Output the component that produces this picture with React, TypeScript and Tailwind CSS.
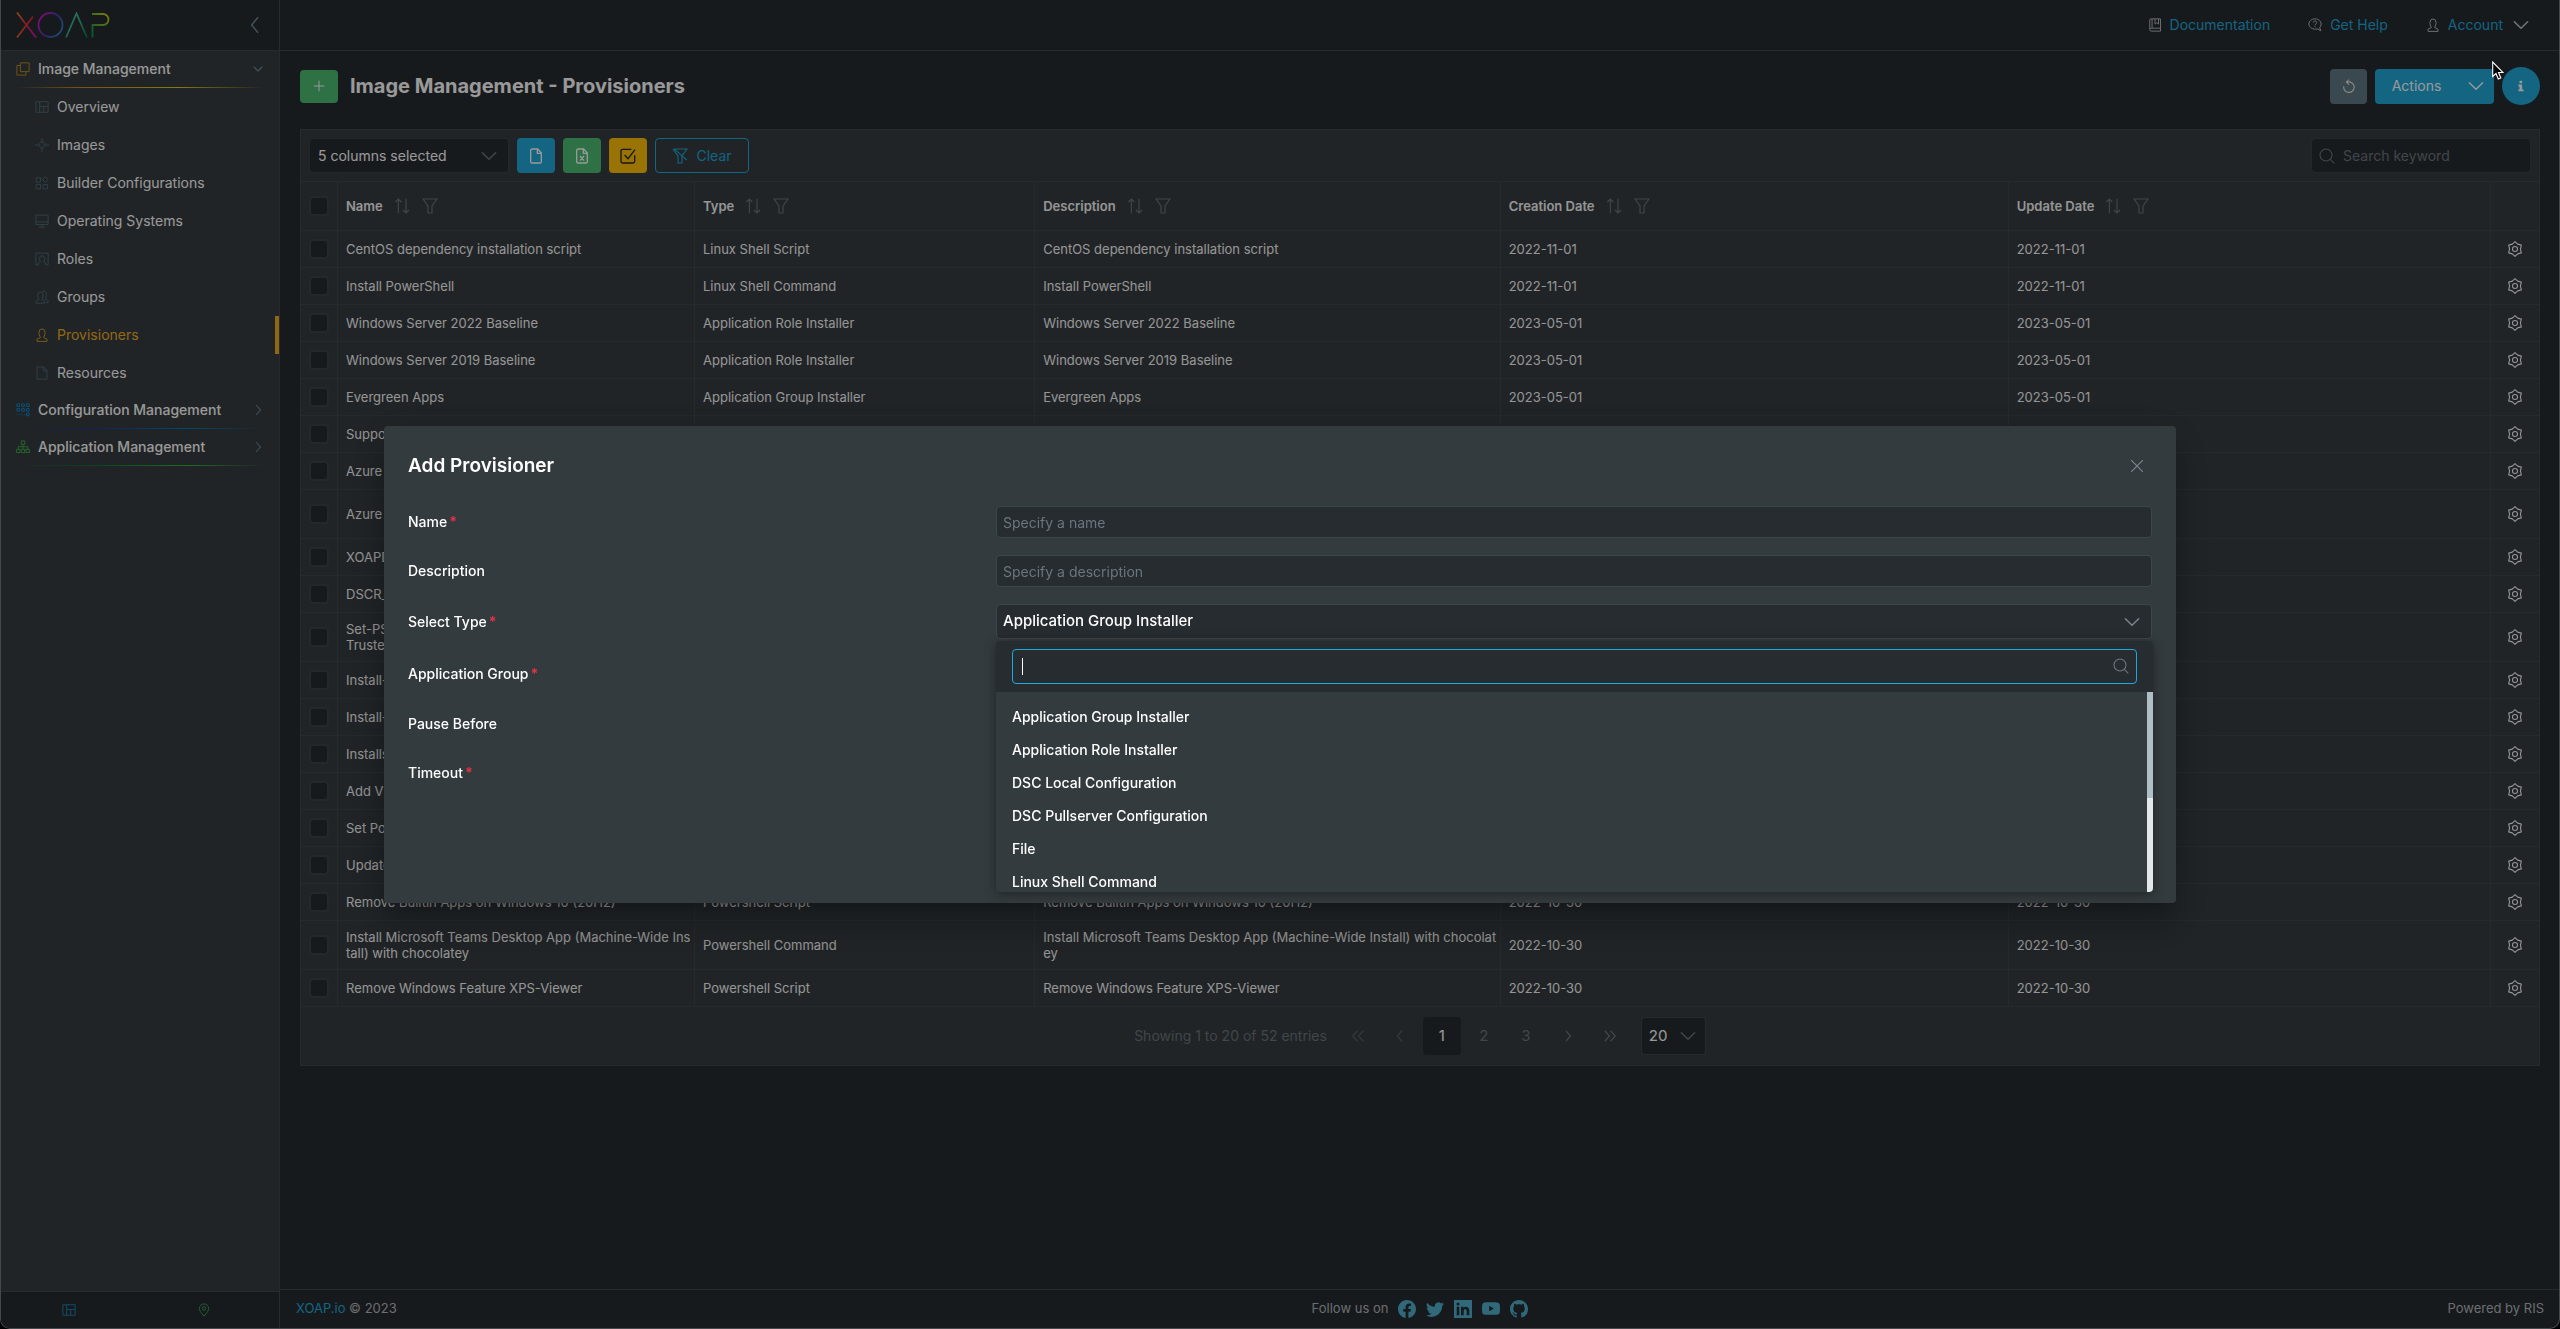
import { useState } from "react";
import type { ReactNode } from "react";
import { BsFacebook, BsGithub, BsTwitter, BsYoutube } from "react-icons/bs";

type IconProps = { className?: string };

// base wrapper for the thin line icons
function Line({ className = "size-3.5", width = 1.7, children }: { className?: string; width?: number; children: ReactNode }) {
    return (
        <svg viewBox="0 0 24 24" fill="none" stroke="currentColor" strokeWidth={width} className={`shrink-0 ${className}`} aria-hidden="true">
            {children}
        </svg>
    );
}

const UserIcon = ({ className }: IconProps) => (
    <Line className={className}><path d="M9 15.200C7.400 13.600 6.800 10.500 6.800 7.500a5.200 5.800 0 0 1 10.400 0c0 3-.6 6.100-2.200 7.700v1.300l5.500 2.500v4h-17v-4L9 16.500z" /></Line>
);
const FileIcon = ({ className }: IconProps) => (
    <Line className={className}><path d="M3.500 1.500h11l6 6v15h-17zM14 1.500V8h6.500" /></Line>
);
const QuiltIcon = ({ className }: IconProps) => (
    <Line className={className}><path d="M1.500 3h21v18h-21zM8 3v18M8 11h14.500M15 11v10" /></Line>
);
const ImagesIcon = () => (
    <Line><path d="M12 0v7M12 17v7M0 12h7M17 12h7M8.500 6l3.500 3 3.500-3M8.500 18l3.500-3 3.500 3M6 8.500L9 12l-3 3.500M18 8.500L15 12l3 3.500" /></Line>
);
const BuilderIcon = () => (
    <Line><path d="M2 3h7.500v7.500H2zM2 14.500h7.500V22H2zM14 14.500h7.500V22H14zM17.700 1l5 5-5 5-5-5z" /></Line>
);
const MonitorIcon = () => (
    <Line><path d="M1.500 2h21v16h-21zM1.500 13.500h21M12 18v4.500M7 22.500h10" /></Line>
);
const RolesIcon = () => (
    <Line><path d="M6 22H1.500V2h21v20H18M6 22v-3.500l3.500-2c-1.500-1.500-1.800-3.500-1.800-5.500a4.300 4.500 0 0 1 8.600 0c0 2-.3 4-1.800 5.500l3.500 2V22" /></Line>
);
const GroupsIcon = () => (
    <Line><path d="M6.500 15.500C5 14 4.500 11 4.500 8.500a4.700 5 0 0 1 9.400 0c0 2.500-.5 5.500-2 7v1l4.600 2.500v3.500h-15V19l5-2.500zM12.500 2.500a4.700 5 0 0 1 6.900 5.500c0 2.500-.5 5-1.900 6.500v1l5 2.500v3.500h-3" /></Line>
);
const CopiesIcon = ({ className }: IconProps) => (
    <Line className={className}><path d="M7.500 1.500h15v15h-15zM7.500 6H1.500v16.500H17v-6" /></Line>
);
const GridIcon = ({ className }: IconProps) => (
    <Line className={className}>
        <path d="M1.500 1.500h4.500v4.500h-4.500zM9.800 1.500h4.500v4.500h-4.500zM18 1.500h4.500v4.500h-4.500zM1.500 9.500h4.500v4.500h-4.500zM9.800 9.500h4.500v4.500h-4.500zM18 9.500h4.500v4.500h-4.500zM18 17.500h4.500v4.500h-4.500zM1 20h2M5.500 20h2M10 20h2M14 20h2" />
    </Line>
);
const SitemapIcon = ({ className }: IconProps) => (
    <Line className={className}><path d="M9 1.500h6v6H9zM1 16h6v5.500H1zM9 16h6v5.500H9zM17 16h6v5.500h-6zM12 7.500V16M4 16v-4.500h16V16" /></Line>
);
const BookIcon = ({ className }: IconProps) => (
    <Line className={className}><path d="M3 18.500V3.500a2 2 0 0 1 2-2h16.500v21H5.500a2.500 2.500 0 0 1 0-5h16M7 1.500v16M12 1.500v9l3-2.500 3 2.500v-9" /></Line>
);
const HelpIcon = ({ className }: IconProps) => (
    <Line className={className}>
        <path d="M12 1.500c6 0 10.500 3.800 10.500 8.800 0 2.700-1 4.700-2.500 6.200l2 5.500-6-3.300c-7 1.800-14.500-2-14.500-8.400C1.500 5.300 6 1.500 12 1.500zM9 7.800c.3-3.300 6-3.300 6 .2 0 2.200-3 2-3 4.500M12 14v1.800" />
    </Line>
);
const GearIcon = ({ className }: IconProps) => (
    <Line className={className} width={1.6}>
        <path strokeLinejoin="round" d="M12 1l4 3.700 5.500 1.500-1.400 5.800 1.400 5.800-5.500 1.500L12 23l-4-3.700-5.500-1.500L3.900 12 2.500 6.200 8 4.700z" />
        <circle cx="12" cy="12" r="3.800" />
    </Line>
);
const PinIcon = ({ className }: IconProps) => (
    <Line className={className}><path d="M12 22.500C7 16.500 4 13 4 9.500a8 8 0 0 1 16 0c0 3.500-3 7-8 13z" /><circle cx="12" cy="9.500" r="3" /></Line>
);
const SearchIcon = ({ className }: IconProps) => (
    <Line className={className} width={1.6}><circle cx="10.500" cy="10.500" r="9" /><path d="M17 17l6 6" /></Line>
);
const SortIcon = () => (
    <Line className="size-4"><path d="M6.500 23V1.500M2 6l4.500-4.500L11 6M18 1v21.500M13.500 18l4.500 4.500 4.500-4.500" /></Line>
);
const FilterIcon = () => (
    <Line className="size-4"><path d="M1.500 1.500h21L15 12v10.500H9V12z" /></Line>
);
const Chevron = ({ className, d = "M2 7l10 10L22 7" }: IconProps & { d?: string }) => (
    <Line className={className} width={2.2}><path strokeLinecap="round" strokeLinejoin="round" d={d} /></Line>
);

const RIGHT = "M8 2l9 10-9 10";
const LEFT = "M16 1L7 12l9 11";

function Logo() {
    return (
        <svg viewBox="0 0 94 26" fill="none" strokeWidth="1.8" className="h-[26px] w-[94px]" role="img" aria-label="XOAP">
            <defs>
                <linearGradient id="lx" x1="0" y1="0" x2="20" y2="26" gradientUnits="userSpaceOnUse">
                    <stop offset="0" stopColor="#e08a18" />
                    <stop offset=".5" stopColor="#e0204c" />
                    <stop offset="1" stopColor="#d012c8" />
                </linearGradient>
                <linearGradient id="lx2" x1="19" y1="0" x2="0" y2="26" gradientUnits="userSpaceOnUse">
                    <stop offset="0" stopColor="#d02030" />
                    <stop offset="1" stopColor="#e06030" />
                </linearGradient>
                <linearGradient id="lo" x1="22" y1="6" x2="47" y2="20" gradientUnits="userSpaceOnUse">
                    <stop offset="0" stopColor="#e010c8" />
                    <stop offset=".5" stopColor="#5038a8" />
                    <stop offset="1" stopColor="#2a88c8" />
                </linearGradient>
                <linearGradient id="la" x1="50" y1="0" x2="71" y2="26" gradientUnits="userSpaceOnUse">
                    <stop offset="0" stopColor="#48b8b0" />
                    <stop offset=".5" stopColor="#38b088" />
                    <stop offset="1" stopColor="#087038" />
                </linearGradient>
                <linearGradient id="lp" x1="93" y1="4" x2="76" y2="20" gradientUnits="userSpaceOnUse">
                    <stop offset="0" stopColor="#c8d010" />
                    <stop offset="1" stopColor="#109848" />
                </linearGradient>
            </defs>
            <path stroke="url(#lx)" d="M1 .5l19 25" />
            <path stroke="url(#lx2)" d="M17 4.500L1 25.500" />
            <circle stroke="url(#lo)" cx="34.500" cy="13" r="12" />
            <path stroke="url(#la)" d="M50 25.500L60.500 1.500l10.500 24" />
            <path stroke="url(#lp)" d="M76 2h11a5.500 5.500 0 0 1 0 11h-10.500v12.500" />
        </svg>
    );
}

const navItems = [
    { label: "Overview", icon: <QuiltIcon /> },
    { label: "Images", icon: <ImagesIcon /> },
    { label: "Builder Configurations", icon: <BuilderIcon /> },
    { label: "Operating Systems", icon: <MonitorIcon /> },
    { label: "Roles", icon: <RolesIcon /> },
    { label: "Groups", icon: <GroupsIcon /> },
    { label: "Provisioners", icon: <UserIcon />, active: true },
    { label: "Resources", icon: <FileIcon /> },
];

const columns = ["Name", "Type", "Description", "Creation Date", "Update Date"];

// name, type, description, date
const rows: [string, string, string, string][] = [
    ["CentOS dependency installation script", "Linux Shell Script", "CentOS dependency installation script", "2022-11-01"],
    ["Install PowerShell", "Linux Shell Command", "Install PowerShell", "2022-11-01"],
    ["Windows Server 2022 Baseline", "Application Role Installer", "Windows Server 2022 Baseline", "2023-05-01"],
    ["Windows Server 2019 Baseline", "Application Role Installer", "Windows Server 2019 Baseline", "2023-05-01"],
    ["Evergreen Apps", "Application Group Installer", "Evergreen Apps", "2023-05-01"],
    ["Support Tools", "Application Group Installer", "Support Tools", "2023-05-01"],
    ["Azure Sysprep", "Powershell Script", "Azure Sysprep", "2022-10-30"],
    ["Azure Cleanup", "Powershell Script", "Azure Cleanup for Windows images that are built and published in the shared gallery", "2022-10-30"],
    ["XOAPDSC", "Powershell Script", "XOAPDSC", "2022-10-30"],
    ["DSCR_Font", "Powershell Script", "DSCR_Font", "2022-10-30"],
    ["Set-PSRepository PSGallery\nTrusted", "Powershell Command", "Set-PSRepository", "2022-10-30"],
    ["Install-Module Az", "Powershell Command", "Install-Module Az", "2022-10-30"],
    ["Install-Provider", "Powershell Command", "Install-Provider", "2022-10-30"],
    ["Installs Chocolatey", "Powershell Script", "Installs Chocolatey", "2022-10-30"],
    ["Add VS Code", "Powershell Command", "Add VS Code", "2022-10-30"],
    ["Set Power Plan", "Powershell Script", "Set Power Plan", "2022-10-30"],
    ["Update Windows", "Powershell Script", "Update Windows", "2022-10-30"],
    ["Remove Builtin Apps on Windows 10 (20H2)", "Powershell Script", "Remove Builtin Apps on Windows 10 (20H2)", "2022-10-30"],
    ["Install Microsoft Teams Desktop App (Machine-Wide Install) with chocolatey", "Powershell Command", "Install Microsoft Teams Desktop App (Machine-Wide Install) with chocolatey", "2022-10-30"],
    ["Remove Windows Feature XPS-Viewer", "Powershell Script", "Remove Windows Feature XPS-Viewer", "2022-10-30"],
];

const types = [
    "Application Group Installer",
    "Application Role Installer",
    "DSC Local Configuration",
    "DSC Pullserver Configuration",
    "File",
    "Linux Shell Command",
];

function NavSection({ label, icon, line, open }: { label: string; icon: ReactNode; line: string; open?: boolean }) {
    return (
        <button type="button" aria-expanded={!!open} className="block w-full px-[15px] text-left">
            <span className="flex h-9 items-center gap-2 text-sm font-medium text-white">
                {icon}
                <span className="grow">{label}</span>
                <Chevron className="size-3 text-[#6c8a99]" d={open ? "M4 8l8 8 8-8" : "M9 3l8 9-8 9"} />
            </span>
            <span className={`block h-px ${line}`} />
        </button>
    );
}

function Sidebar() {
    return (
        <aside className="flex w-[279px] shrink-0 flex-col border-r border-[#42494d] bg-[#363d40]">
            <div className="flex h-[51px] items-center justify-between border-b border-[#42494d] bg-[#272c31] pr-4 pl-[15px]">
                <Logo />
                <button type="button" aria-label="Collapse menu" className="text-[#6c8a99]"><Chevron className="size-4" d={LEFT} /></button>
            </div>
            <nav className="grow">
                <NavSection
                    open
                    label="Image Management"
                    line="bg-[linear-gradient(90deg,transparent,#c08a20_25%,#e0cc20_65%,transparent)]"
                    icon={<CopiesIcon className="size-3.5 text-[#b58a24]" />}
                />
                <ul>
                    {navItems.map((item) => (
                        <li key={item.label}>
                            <a
                                href="#"
                                className={`flex h-[38px] items-center gap-2 border-r-4 pl-[34px] text-sm ${item.active ? "border-[#f0ae22] text-[#f0ae22]" : "border-transparent text-white"}`}
                            >
                                <span className={item.active ? "opacity-80" : "text-[#4f6a76]"}>{item.icon}</span>
                                {item.label}
                            </a>
                        </li>
                    ))}
                </ul>
                <NavSection
                    label="Configuration Management"
                    line="bg-[linear-gradient(90deg,transparent,#203890_30%,#0878b0_70%,transparent)]"
                    icon={<GridIcon className="size-3.5 text-[#0f86c4]" />}
                />
                <NavSection
                    label="Application Management"
                    line="bg-[linear-gradient(90deg,transparent,#147038_30%,#3cb038_70%,transparent)]"
                    icon={<SitemapIcon className="size-3.5 text-[#3ca848]" />}
                />
            </nav>
            <div className="grid h-[37px] grid-cols-2 items-center justify-items-center border-t border-[#42494d] bg-[#272c31] pr-2">
                <button type="button" aria-label="Dashboard" className="text-[#1f7ea4]"><QuiltIcon className="size-3.5" /></button>
                <button type="button" aria-label="Location" className="text-[#3f9a5c]"><PinIcon className="size-3.5" /></button>
            </div>
        </aside>
    );
}

function TopBar() {
    return (
        <header className="flex h-[51px] items-center justify-end gap-[38px] border-b border-[#42494d] pr-[30px] text-sm text-[#20a8d8]">
            <a href="#" className="flex items-center gap-2"><BookIcon className="size-3.5 text-[#b4b8bc]" />Documentation</a>
            <a href="#" className="flex items-center gap-2"><HelpIcon className="size-3.5 text-[#b4b8bc]" />Get Help</a>
            <button type="button" className="flex items-center gap-2">
                <UserIcon className="size-3.5 text-[#b4b8bc]" />Account
                <Chevron className="ml-0.5 size-4 text-[#c0c4c8]" />
            </button>
        </header>
    );
}

function Toolbar() {
    return (
        <div className="flex gap-2 border-b border-[#42494d] p-2">
            <div className="relative">
                <select aria-label="Columns" className="h-[35px] w-50 appearance-none rounded-sm border border-[#3d4448] bg-[#272c31] px-2 text-sm text-white">
                    <option>5 columns selected</option>
                </select>
                <Chevron className="pointer-events-none absolute top-2.5 right-3 size-4 text-[#6c757d]" />
            </div>
            <button type="button" aria-label="Export CSV" className="flex h-[35px] w-[38px] items-center justify-center rounded-sm bg-[#20a8d8] text-white">
                <Line className="size-4" width={2}><path d="M4 3.500a2 2 0 0 1 2-2h8.500l5.500 6v13a2 2 0 0 1-2 2H6a2 2 0 0 1-2-2zM14 1.500V8h6" /></Line>
            </button>
            <button type="button" aria-label="Export Excel" className="flex h-[35px] w-[38px] items-center justify-center rounded-sm bg-[#4dbd74] text-white">
                <Line className="size-4" width={2}><path d="M4 3.500a2 2 0 0 1 2-2h8.500l5.500 6v13a2 2 0 0 1-2 2H6a2 2 0 0 1-2-2zM14 1.500V8h6M9 12l6 7M15 12l-6 7" /></Line>
            </button>
            <button type="button" aria-label="Select all" className="flex h-[35px] w-[38px] items-center justify-center rounded-sm bg-[#ffc107] text-[#23282c]">
                <Line className="size-4" width={2}><path d="M17 2H4a2.500 2.500 0 0 0-2.500 2.500v15.500a2.500 2.500 0 0 0 2.500 2.500h15.500a2.500 2.500 0 0 0 2.500-2.500V11M7 10.500l5 5.500L22.500 2.500" /></Line>
            </button>
            <button type="button" className="flex h-[35px] w-[94px] items-center justify-center gap-2 rounded-sm border border-[#20a8d8] text-sm text-[#20a8d8]">
                <Line className="size-4"><path d="M5 1.500h17.500L15 12v10.500H9V12L1.500 1.500M3 1l19 17" /></Line>
                Clear
            </button>
            <label className="ml-auto flex h-[35px] w-[220px] items-center gap-2 rounded-sm border border-[#3d4448] bg-[#272c31] px-[7px] text-[#6c757d]">
                <SearchIcon className="size-4" />
                <input type="text" placeholder="Search keyword" aria-label="Search keyword" className="w-full min-w-0 bg-transparent text-sm outline-none placeholder:text-[#6c757d]" />
            </label>
        </div>
    );
}

function Check({ label }: { label: string }) {
    return <input type="checkbox" aria-label={label} className="block size-5 appearance-none rounded-sm border-2 border-[#3d4448] bg-[#272c31]" />;
}

function ProvisionerTable() {
    const cell = "border-r border-b border-[#3f464a] pl-2";
    return (
        <table className="w-full table-fixed border-separate border-spacing-0 text-left text-[13px] leading-4 text-[#f8f8f8]">
            <colgroup>
                <col className="w-[37px]" />
                <col className="w-[357px]" />
                <col className="w-[15.2%]" />
                <col className="w-[20.8%]" />
                <col className="w-[22.7%]" />
                <col />
                <col className="w-12" />
            </colgroup>
            <thead>
                <tr className="h-[49px]">
                    <th className={cell}><Check label="Select all rows" /></th>
                    {columns.map((c) => (
                        <th key={c} className={cell}>
                            <span className="flex items-center gap-[11px] font-semibold">
                                {c}
                                <span className="flex gap-3 text-[#6c757d]"><SortIcon /><FilterIcon /></span>
                            </span>
                        </th>
                    ))}
                    <th className="border-b border-[#3f464a]" />
                </tr>
            </thead>
            <tbody>
                {rows.map(([name, type, description, date]) => (
                    <tr key={name} className="break-all whitespace-pre-line">
                        <td className={cell}><Check label={name} /></td>
                        <td className={`${cell} py-2`}>{name}</td>
                        <td className={`${cell} py-2`}>{type}</td>
                        <td className={`${cell} py-2`}>{description}</td>
                        <td className={`${cell} py-2`}>{date}</td>
                        <td className={`${cell} py-2`}>{date}</td>
                        <td className="border-b border-[#3f464a] py-2">
                            <button type="button" aria-label={`Edit ${name}`} className="mx-auto flex size-5 items-center justify-center"><GearIcon className="size-4" /></button>
                        </td>
                    </tr>
                ))}
            </tbody>
        </table>
    );
}

function Pagination() {
    const btn = "flex size-[38px] items-center justify-center rounded-sm";
    return (
        <div className="flex items-center justify-center gap-3 py-2.5 text-[#6c757d]">
            <span className="text-sm">Showing 1 to 20 of 52 entries</span>
            <div className="flex gap-1 text-[15px]">
                <button type="button" aria-label="First page" className={`${btn} opacity-60`}><Line width={2}><path d="M11 3l-8 9 8 9M21 3l-8 9 8 9" /></Line></button>
                <button type="button" aria-label="Previous page" className={`${btn} opacity-60`}><Line className="size-3" width={2.5}><path d={LEFT} /></Line></button>
                <button type="button" className={`${btn} bg-[#272c31] text-white`}>1</button>
                <button type="button" className={btn}>2</button>
                <button type="button" className={btn}>3</button>
                <button type="button" aria-label="Next page" className={btn}><Line className="size-3" width={2.5}><path d={RIGHT} /></Line></button>
                <button type="button" aria-label="Last page" className={btn}><Line width={2.2}><path d="M3 3l8 9-8 9M13 3l8 9-8 9" /></Line></button>
            </div>
            <div className="relative">
                <select aria-label="Rows per page" className="block h-[38px] w-[65px] appearance-none rounded-sm border border-[#42494d] bg-[#272c31] px-[7px] text-[15px] text-white">
                    <option>20</option>
                </select>
                <Chevron className="pointer-events-none absolute top-[11px] right-2.5 size-4 text-[#6c757d]" />
            </div>
        </div>
    );
}

function Footer() {
    return (
        <footer className="grid h-[39px] grid-cols-3 items-center border-t border-[#42494d] pr-[15px] pl-4 text-[13px] text-[#b4b8bb]">
            <p><a href="#" className="text-[#20a8d8]">XOAP.io</a> © 2023</p>
            <div className="flex items-center justify-center gap-2.5 text-[#4fb0cc]">
                <span className="text-[#b4b8bb]">Follow us on</span>
                <a href="#" aria-label="Facebook"><BsFacebook size={18} /></a>
                <a href="#" aria-label="Twitter"><BsTwitter size={18} /></a>
                <a href="#" aria-label="LinkedIn">
                    <svg viewBox="0 0 18 18" fill="currentColor" className="size-[18px]">
                        <path fillRule="evenodd" d="M0 0h18v18H0zM2.700 6.800v8.500h2.600V6.800zM4 2.500a1.500 1.500 0 1 0 0 3 1.500 1.500 0 0 0 0-3zM7 6.800v8.500h2.700v-4.200c0-2.600 3-2.600 3 0v4.200h2.600v-4.800c0-4.300-4.300-4.800-5.700-2.500V6.800z" />
                    </svg>
                </a>
                <a href="#" aria-label="YouTube"><BsYoutube size={18} /></a>
                <a href="#" aria-label="GitHub"><BsGithub size={18} /></a>
            </div>
            <p className="text-right">Powered by RIS</p>
        </footer>
    );
}

function Label({ id, required, children }: { id: string; required?: boolean; children: ReactNode }) {
    return (
        <label htmlFor={id} className="flex items-center gap-0.5 text-sm font-medium text-white">
            {children}
            {required && <span className="font-bold text-[#dc3545]">*</span>}
        </label>
    );
}

function AddProvisioner() {
    const [name, setName] = useState("");
    const [description, setDescription] = useState("");
    const [filter, setFilter] = useState("");
    const field = "w-full rounded-sm border border-[#3f464b] bg-[#272c31] px-1.5 text-white outline-none placeholder:text-[#6c757d]";
    const shown = types.filter((t) => t.toLowerCase().includes(filter.toLowerCase()));

    return (
        <div
            role="dialog"
            aria-label="Add Provisioner"
            className="min-h-[477px] w-[70%] rounded-sm bg-[#343b3e] p-6 shadow-[0_11px_15px_-7px_rgba(0,0,0,0.2),0_24px_38px_3px_rgba(0,0,0,0.14),0_9px_46px_8px_rgba(0,0,0,0.12)]"
        >
            <div className="flex h-8 items-center justify-between pr-2">
                <h2 className="text-[19px] font-semibold text-white">Add Provisioner</h2>
                <button type="button" aria-label="Close" className="text-[#7c858d]">
                    <Line className="size-3.5" width={2}><path d="M2 2l20 20M22 2L2 22" /></Line>
                </button>
            </div>
            <form className="mt-6 grid grid-cols-[1fr_2fr] gap-x-2.5 gap-y-[17px]">
                <Label id="name" required>Name</Label>
                <input id="name" type="text" placeholder="Specify a name" value={name} onChange={(e) => setName(e.target.value)} className={`${field} h-8 text-sm`} />

                <Label id="description">Description</Label>
                <input id="description" type="text" placeholder="Specify a description" value={description} onChange={(e) => setDescription(e.target.value)} className={`${field} h-8 text-sm`} />

                <Label id="type" required>Select Type</Label>
                <div className="relative">
                    <select id="type" className={`${field} block h-[35px] appearance-none text-[15px] font-medium`}>
                        <option>Application Group Installer</option>
                    </select>
                    <Chevron className="pointer-events-none absolute top-2.5 right-3 size-4 text-[#7c858d]" />

                    <div className="absolute top-[37px] -right-px left-0 z-10 overflow-hidden rounded-sm bg-[#343b3e] shadow-[0_2px_12px_rgba(0,0,0,0.4)]">
                        <div className="relative bg-[#272c31] px-4 py-2">
                            <input
                                type="text"
                                aria-label="Filter types"
                                value={filter}
                                onChange={(e) => setFilter(e.target.value)}
                                className="block h-[35px] w-full rounded-sm border border-[#20a8d8] bg-[#272c31] px-2.5 text-sm text-white outline-none"
                            />
                            <span className="absolute top-[17px] left-[26px] h-[17px] w-px bg-white" />
                            <SearchIcon className="absolute top-[17px] right-6 size-4 text-[#6c757d]" />
                        </div>
                        <div className="flex h-50">
                            <ul role="listbox" aria-label="Types" className="grow overflow-hidden py-2 text-sm font-medium text-white">
                                {shown.map((t) => (
                                    <li key={t} role="option" aria-selected={false} className="flex h-[33px] items-center px-4">{t}</li>
                                ))}
                            </ul>
                            <div className="w-1.5 bg-[#e2e7e9]">
                                <div className="h-[53%] bg-[#b0bec5]" />
                            </div>
                        </div>
                    </div>
                </div>

                <Label id="group" required>Application Group</Label>
                <select id="group" className={`${field} h-[35px] appearance-none`} />

                <Label id="pause">Pause Before</Label>
                <input id="pause" type="text" className={`${field} h-8`} />

                <Label id="timeout" required>Timeout</Label>
                <input id="timeout" type="text" className={`${field} h-8`} />
            </form>
        </div>
    );
}

export default function App() {
    return (
        <div className="bg-black font-[Inter,'Liberation_Sans',sans-serif]">
            <div className="flex min-h-screen overflow-hidden rounded-b-[10px] border-x border-b border-[#75797e] bg-[#272c31]">
                <Sidebar />
                <div className="flex min-w-0 grow flex-col">
                    <TopBar />
                    <main className="grow pt-4 pr-[19px] pl-5">
                        <div className="mb-6 flex h-[38px] items-center gap-2">
                            <button type="button" aria-label="Add" className="flex h-[33px] w-[38px] items-center justify-center rounded-sm bg-[#4dbd74] text-white">
                                <Line className="size-3.5"><path d="M12 3v18M3 12h18" /></Line>
                            </button>
                            <h1 className="ml-1 grow text-xl font-bold text-white">Image Management - Provisioners</h1>
                            <button type="button" aria-label="Refresh" className="flex h-[35px] w-[37px] items-center justify-center rounded-sm bg-[#617885] text-[#e0e0e0]">
                                <Line width={2}><path d="M3 12.500a9 9 0 1 0 9-7.500H7M12 1L7.500 5l4.500 4.500" /></Line>
                            </button>
                            <div className="flex h-[35px] overflow-hidden rounded-sm bg-[#20a8d8] text-sm text-white">
                                <button type="button" className="w-[83px]">Actions</button>
                                <button type="button" aria-label="More actions" className="flex w-9 items-center justify-center"><Chevron className="size-4" /></button>
                            </div>
                            <button type="button" aria-label="Info" className="flex size-[38px] items-center justify-center rounded-full bg-[#20a8d8] text-white">
                                <svg viewBox="0 0 8 14" fill="currentColor" className="h-3 w-1.5"><path d="M2 0h3.500v3.200H2zM.5 5h5v6.500H7.500V14h-7v-2.500H2V7.500H.5z" /></svg>
                            </button>
                        </div>
                        <section className="border border-[#42494d] bg-[#363d40]">
                            <Toolbar />
                            <ProvisionerTable />
                            <Pagination />
                        </section>
                    </main>
                    <Footer />
                </div>
            </div>

            <div className="fixed inset-0 flex items-center justify-center bg-black/40">
                <AddProvisioner />
            </div>

            {/* mouse pointer */}
            <svg viewBox="0 0 12 19" className="absolute top-[61px] right-14 h-[19px] w-3" aria-hidden="true">
                <path d="M.7 1v14.500l3.300-3 2.300 5.500 2.500-1-2.300-5.500h4.600z" fill="#000" stroke="#fff" strokeWidth="1.1" />
            </svg>
        </div>
    );
}
